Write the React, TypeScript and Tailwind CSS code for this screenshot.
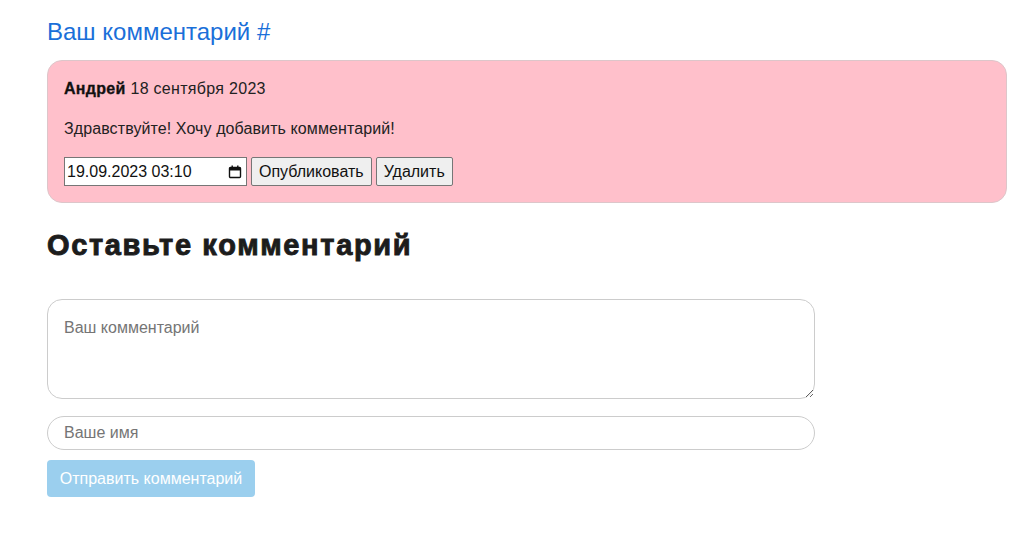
import React, { useState } from 'react';

const CalendarIcon: React.FC = () => (
  <svg width="14" height="14" viewBox="0 0 14 14" className="shrink-0">
    <rect x="1.5" y="2.5" width="11" height="10" rx="1" fill="none" stroke="#111" strokeWidth="1.4" />
    <rect x="1.5" y="2.5" width="11" height="3" fill="#111" />
    <rect x="3.5" y="0.5" width="1.4" height="3" fill="#111" />
    <rect x="9.1" y="0.5" width="1.4" height="3" fill="#111" />
  </svg>
);

const App: React.FC = () => {
  const [text, setText] = useState('');
  const [name, setName] = useState('');

  return (
    <div className="min-h-screen bg-white px-[47px] pt-[17px] text-[16px] text-[#222] font-['Liberation_Sans',Arial,sans-serif]">
      <h2 className="text-[24px] leading-[30px] text-[#1a6fd9]">Ваш комментарий #</h2>

      <div className="mt-[13px] w-[960px] rounded-[15px] border border-[#ddc6ca] bg-[#ffc0cb] px-4 pt-[18px] pb-4">
        <div className="leading-[20px] tracking-[0.3px]">
          <b className="font-bold text-[#111] [-webkit-text-stroke:0.3px_#111]">Андрей</b> 18 сентября 2023
        </div>
        <p className="mt-[20px] leading-[20px] tracking-[0.1px]">Здравствуйте! Хочу добавить комментарий!</p>
        <div className="mt-[18px] flex items-center gap-[4px]">
          <div className="flex h-[29px] w-[183px] items-center justify-between border border-[#767676] bg-white pl-[2px] pr-[4px] text-[#111]">
            <span>19.09.2023 03:10</span>
            <CalendarIcon />
          </div>
          <button className="h-[29px] rounded-[2px] border border-[#767676] bg-[#efefef] px-[7px] text-[#111]">Опубликовать</button>
          <button className="h-[29px] rounded-[2px] border border-[#767676] bg-[#efefef] px-[7px] text-[#111]">Удалить</button>
        </div>
      </div>

      <h1 className="mt-[25px] text-[29px] leading-[34px] font-bold tracking-[1.65px] text-[#1c1c1c] [-webkit-text-stroke:0.9px_#1c1c1c]">Оставьте комментарий</h1>

      <form className="mt-[37px] flex w-[768px] flex-col" onSubmit={e => e.preventDefault()}>
        <textarea
          value={text}
          onChange={e => setText(e.target.value)}
          placeholder="Ваш комментарий"
          className="h-[100px] w-full rounded-[15px] border border-[#cccccc] px-4 py-[18px] text-[16px] leading-[20px] outline-none placeholder:text-[#757575]"
        />
        <input
          value={name}
          onChange={e => setName(e.target.value)}
          placeholder="Ваше имя"
          className="mt-[17px] h-[34px] w-full rounded-[17px] border border-[#cccccc] px-4 text-[16px] outline-none placeholder:text-[#757575]"
        />
        <button
          type="submit"
          disabled
          className="mt-[10px] h-[37px] w-[208px] rounded-[4px] bg-[#9bcfee] text-[16px] text-white"
        >
          Отправить комментарий
        </button>
      </form>
    </div>
  );
};

export default App;
